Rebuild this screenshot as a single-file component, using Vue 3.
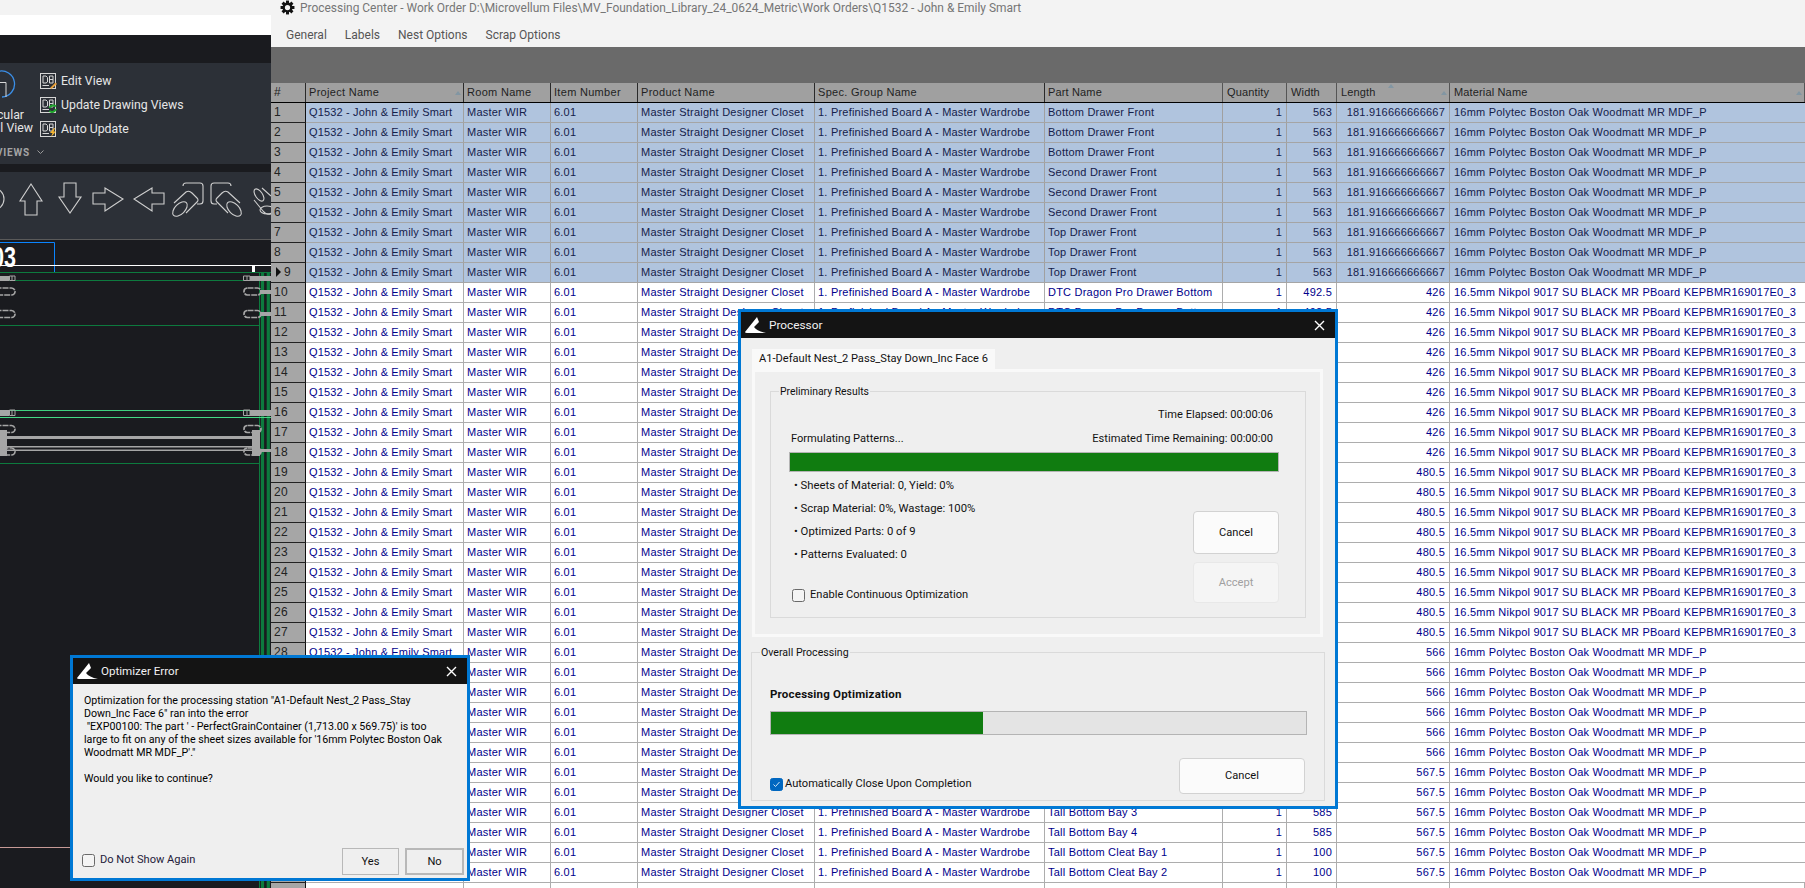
<script setup>
const M16 = '16mm Polytec Boston Oak Woodmatt MR MDF_P'
const N = '16.5mm Nikpol 9017 SU BLACK MR PBoard KEPBMR169017E0_3'
const SPEC = '1. Prefinished Board A - Master Wardrobe'
const known = {
  1: ['Bottom Drawer Front', 563], 2: ['Bottom Drawer Front', 563], 3: ['Bottom Drawer Front', 563],
  4: ['Second Drawer Front', 563], 5: ['Second Drawer Front', 563], 6: ['Second Drawer Front', 563],
  7: ['Top Drawer Front', 563], 8: ['Top Drawer Front', 563], 9: ['Top Drawer Front', 563],
  10: ['DTC Dragon Pro Drawer Bottom', 492.5], 11: ['DTC Dragon Pro Drawer Bottom', 492.5],
  36: ['Tall Bottom Bay 3', 585], 37: ['Tall Bottom Bay 4', 585],
  38: ['Tall Bottom Cleat Bay 1', 100], 39: ['Tall Bottom Cleat Bay 2', 100]
}
const rows = Array.from({ length: 39 }, (_, i) => {
  const n = i + 1
  const k = known[n]
  let length = '567.5'
  let material = M16
  if (n <= 9) length = '181.916666666667'
  else if (n <= 18) { length = '426'; material = N }
  else if (n <= 27) { length = '480.5'; material = N }
  else if (n <= 33) length = '566'
  const underDialog = n >= 29
  return {
    n,
    label: underDialog ? '' : n,
    project: underDialog ? '' : 'Q1532 - John & Emily Smart',
    selected: n <= 9,
    spec: k ? SPEC : '',
    part: k ? k[0] : '',
    qty: k ? 1 : '',
    width: k ? k[1] : '',
    length,
    material
  }
})
const tools = [
  { label: 'Edit View', badge: 'pencil' },
  { label: 'Update Drawing Views', badge: 'refresh' },
  { label: 'Auto Update', badge: 'bolt' }
]
const bullets = ['Sheets of Material: 0, Yield: 0%', 'Scrap Material: 0%, Wastage: 100%', 'Optimized Parts: 0 of 9', 'Patterns Evaluated: 0']
const teeth = [0, 45, 90, 135, 180, 225, 270, 315]
const pillYs = [291.5, 314, 429, 451.5]
const message = [
  'Optimization for the processing station "A1-Default Nest_2 Pass_Stay',
  'Down_Inc Face 6" ran into the error',
  ' "EXP00100: The part \' - PerfectGrainContainer (1,713.00 x 569.75)\' is too',
  'large to fit on any of the sheet sizes available for \'16mm Polytec Boston Oak',
  'Woodmatt MR MDF_P\'."',
  '',
  'Would you like to continue?'
].join('\n')
</script>

<template>
  <div class="desktop">
    <section class="cad">
      <div class="cad-white-top"></div>
      <div class="cad-white"></div>
      <div class="cad-dark"></div>
      <div class="ribbon">
        <svg class="view-circle" width="20" height="30" viewBox="0 0 20 30">
          <path d="M-8 1.5 A 13 13 0 1 1 -4 27" transform="translate(6 0)" fill="none" stroke="#3b8fe8" stroke-width="1.3" />
          <path d="M0 12.5 H6 V27" fill="none" stroke="#d8d8d8" stroke-width="1" />
        </svg>
        <div class="view-label">
          <span>cular</span>
          <span>il View</span>
        </div>
        <div class="tool-list">
          <div v-for="t in tools" :key="t.label" class="tool">
            <svg width="17" height="17" viewBox="0 0 17 17">
              <rect x="0.5" y="1.5" width="15" height="15" fill="none" stroke="#d6d6d6" />
              <path d="M3 4 H6 L7.5 5.5 V10 L6 11 H3 Z M9.5 4 H13 V11 H9.5 Z M9.5 7.5 H13" fill="none" stroke="#d6d6d6" />
              <path d="M2.5 13.5 H9" stroke="#d6d6d6" />
              <path v-if="t.badge === 'pencil'" d="M10 16 L15.5 10.5 L17 12 L11.5 17 Z" fill="#e8a13c" />
              <g v-else-if="t.badge === 'refresh'" fill="none" stroke="#1fa52c" stroke-width="2">
                <path d="M9.5 12 A4 4 0 0 1 16 10.5" />
                <path d="M16 13 A4 4 0 0 1 9.5 15" />
              </g>
              <path v-else d="M14 8 L10 13 H12.5 L11 17 L16 11.5 H13.5 L15 8 Z" fill="#f5b52e" />
            </svg>
            <span>{{ t.label }}</span>
          </div>
        </div>
        <div class="views-caption">
          <span>VIEWS</span>
          <svg width="7" height="5" viewBox="0 0 7 5"><path d="M0.5 0.5 L3.5 3.5 L6.5 0.5" fill="none" stroke="#9a9a9a" /></svg>
        </div>
      </div>
      <div class="cad-gap"></div>
      <div class="arrows">
        <svg width="271" height="67" viewBox="0 0 271 67" fill="none" stroke="#cfcfcf" stroke-width="1.1">
          <circle cx="-7" cy="27" r="11" />
          <path d="M31 12 L42 29 H37 V43 H25 V29 H20 Z" />
          <path d="M64 11 H76 V25 H81 L70 41 L59 25 H64 Z" />
          <path d="M93 21 H105 V16 L123 27 L105 39 V32 H93 Z" />
          <path d="M164 21 H152 V16 L134 27 L152 39 V32 H164 Z" />
          <g>
            <path d="M183 14 Q183 11 186 11 H200 Q203 11 203 14 V29 Q203 32 200 32 H197" />
            <ellipse cx="180" cy="37" rx="9" ry="5" transform="rotate(-45 180 37)" />
            <path d="M174 31 L186 20 Q189 18 192 21 L197 26 Q199 28 197 30 L186 41" />
          </g>
          <g transform="translate(414 0) scale(-1 1)">
            <path d="M183 14 Q183 11 186 11 H200 Q203 11 203 14 V29 Q203 32 200 32 H197" />
            <ellipse cx="180" cy="37" rx="9" ry="5" transform="rotate(-45 180 37)" />
            <path d="M174 31 L186 20 Q189 18 192 21 L197 26 Q199 28 197 30 L186 41" />
          </g>
          <ellipse cx="259" cy="23" rx="3.5" ry="7" transform="rotate(-35 259 23)" />
          <path d="M262 16 L271 24 M254 28 L263 39 Q266 43 271 42" />
          <ellipse cx="267" cy="38" rx="7" ry="4" />
        </svg>
      </div>
      <svg class="drawing" width="271" height="648" viewBox="0 240 271 648">
        <path d="M0 242.5 H54.5 V272" fill="none" stroke="#0a84ff" />
        <text class="dim" transform="translate(-8 267) scale(0.72 1)">03</text>
        <path d="M0 265.5 H271" stroke="#fff" />
        <rect x="252" y="266" width="3" height="6" fill="#fff" />
        <g stroke="#0d7a3e">
          <path d="M0 272.5 H271 M0 280.5 H271 M0 325.5 H260 M0 463.5 H260" />
          <path d="M259.5 272 V888" />
          <path d="M262.5 272 V888 M268.3 272 V888" stroke-width="3.2" />
        </g>
        <path d="M0 410.5 H271" stroke="#3fd07f" />
        <path d="M0 417.5 H271" stroke="#45d985" />
        <g fill="#a6a6a6">
          <rect x="0" y="276" width="9" height="5" />
          <rect x="250" y="276" width="21" height="5" />
          <rect x="0" y="410" width="9" height="6" />
          <rect x="250" y="410" width="21" height="6" />
          <rect x="260" y="290" width="11" height="4" />
          <rect x="260" y="312" width="11" height="4" />
          <rect x="0" y="430" width="7" height="26" />
          <rect x="252" y="430" width="8" height="26" />
          <rect x="7" y="436" width="245" height="3" />
          <rect x="7" y="446" width="245" height="1.5" />
          <rect x="7" y="449.5" width="245" height="1.5" />
          <rect x="260" y="449" width="11" height="3" />
        </g>
        <g fill="none" stroke="#a6a6a6">
          <path d="M9.5 276 H15 V280.5 H9.5 Z M12 276 V280 M243.5 276 H250 V280.5 H243.5 Z M247 276 V280" />
          <path d="M9.5 410 H15 V415.5 H9.5 Z M12 410 V415 M243.5 410 H250 V415.5 H243.5 Z M247 410 V415" />
        </g>
        <g v-for="y in pillYs" :key="y" fill="none" stroke="#a6a6a6" stroke-width="1.7" stroke-dasharray="6 1">
          <rect x="-8" :y="y - 3.5" width="23" height="7" rx="3.5" />
          <rect x="244" :y="y - 3.5" width="17" height="7" rx="3.5" />
        </g>
        <path d="M0 847.5 H70" stroke="#c79a96" />
      </svg>
    </section>

    <section class="center">
      <div class="pc-top">
        <div class="pc-title">
          <svg width="15" height="15" viewBox="-8 -8 16 16">
            <rect v-for="a in teeth" :key="a" x="-1.6" y="-7.4" width="3.2" height="3" :transform="`rotate(${a})`" fill="#111" />
            <circle r="4.1" fill="none" stroke="#111" stroke-width="2.6" />
          </svg>
          <span>Processing Center - Work Order D:\Microvellum Files\MV_Foundation_Library_24_0624_Metric\Work Orders\Q1532 - John &amp; Emily Smart</span>
        </div>
        <nav class="pc-menu">
          <span>General</span><span>Labels</span><span>Nest Options</span><span>Scrap Options</span>
        </nav>
      </div>
      <div class="band"></div>
      <div class="grid">
        <div class="row head">
          <div class="c num">#</div>
          <div class="c">Project Name<i class="sort"></i></div>
          <div class="c">Room Name</div>
          <div class="c">Item Number</div>
          <div class="c">Product Name</div>
          <div class="c">Spec. Group Name</div>
          <div class="c">Part Name</div>
          <div class="c">Quantity</div>
          <div class="c">Width</div>
          <div class="c">Length<i class="sort top"></i><i class="sort"></i></div>
          <div class="c">Material Name<i class="sort"></i></div>
        </div>
        <div v-for="r in rows" :key="r.n" class="row" :class="{ selected: r.selected }">
          <div class="c num"><i v-if="r.n === 9" class="current"></i>{{ r.label }}</div>
          <div class="c project">{{ r.project }}</div>
          <div class="c">Master WIR</div>
          <div class="c">6.01</div>
          <div class="c">Master Straight Designer Closet</div>
          <div class="c">{{ r.spec }}</div>
          <div class="c">{{ r.part }}</div>
          <div class="c right">{{ r.qty }}</div>
          <div class="c right">{{ r.width }}</div>
          <div class="c right">{{ r.length }}</div>
          <div class="c mat">{{ r.material }}</div>
        </div>
        <div class="row"><div class="c num"></div><div class="c"></div><div class="c"></div><div class="c"></div><div class="c"></div><div class="c"></div><div class="c"></div><div class="c"></div><div class="c"></div><div class="c"></div><div class="c"></div></div>
      </div>
    </section>

    <div class="win processor">
      <header class="win-title">
        <svg class="logo" width="21" height="16" viewBox="0 0 21 16"><path d="M12 0 L0 15 Q0 16 2 16 L21 16 Q12 14 9 10 L14 5 Z" fill="#fff" /></svg>
        <span>Processor</span>
        <svg class="close" width="11" height="11" viewBox="0 0 11 11"><path d="M1 1 L10 10 M10 1 L1 10" stroke="#fff" stroke-width="1.4" /></svg>
      </header>
      <div class="proc-body">
        <div class="tab">A1-Default Nest_2 Pass_Stay Down_Inc Face 6</div>
        <div class="tab-panel">
          <div class="group prelim">
            <span class="legend">Preliminary Results</span>
            <div class="status one"><span>Time Elapsed: 00:00:06</span></div>
            <div class="status two"><span>Formulating Patterns...</span><span>Estimated Time Remaining: 00:00:00</span></div>
            <div class="bar small"><div class="fill full"></div></div>
            <div class="prelim-lower">
              <div class="prelim-left">
                <div v-for="b in bullets" :key="b" class="bullet">• {{ b }}</div>
                <label class="check cont"><i class="box"></i>Enable Continuous Optimization</label>
              </div>
              <div class="prelim-btns">
                <div class="btn big">Cancel</div>
                <div class="btn big disabled">Accept</div>
              </div>
            </div>
          </div>
        </div>
        <div class="group overall">
          <span class="legend">Overall Processing</span>
          <div class="ov-label">Processing Optimization</div>
          <div class="bar large"><div class="fill part"></div></div>
          <div class="ov-bottom">
            <label class="check auto">
              <i class="box on"><svg width="9" height="9" viewBox="0 0 9 9"><path d="M1.5 4.5 L3.5 6.5 L7.5 2" fill="none" stroke="#cfe4f7" stroke-width="1" /></svg></i>
              Automatically Close Upon Completion
            </label>
            <div class="btn wide">Cancel</div>
          </div>
        </div>
      </div>
    </div>

    <div class="win opt-error">
      <header class="win-title">
        <svg class="logo" width="21" height="16" viewBox="0 0 21 16"><path d="M12 0 L0 15 Q0 16 2 16 L21 16 Q12 14 9 10 L14 5 Z" fill="#fff" /></svg>
        <span>Optimizer Error</span>
        <svg class="close" width="11" height="11" viewBox="0 0 11 11"><path d="M1 1 L10 10 M10 1 L1 10" stroke="#fff" stroke-width="1.4" /></svg>
      </header>
      <div class="err-body">
        <p class="msg">{{ message }}</p>
        <div class="err-foot">
          <label class="check dns"><i class="box"></i>Do Not Show Again</label>
          <div class="err-btns">
            <div class="btn yes">Yes</div>
            <div class="btn no">No</div>
          </div>
        </div>
      </div>
    </div>
  </div>
</template>

<style>
html, body { margin: 0; background: #1a1b1f; overflow: hidden; }
</style>

<style scoped>
.desktop {
  position: relative;
  display: flex;
  width: 1805px;
  height: 888px;
  overflow: hidden;
  font-family: Roboto, "Liberation Sans", sans-serif;
}
.cad {
  flex: 0 0 271px;
  width: 271px;
  background: #1a1b1f;
  overflow: hidden;
  display: flex;
  flex-direction: column;
}
.cad > * { flex: none; }
.cad-white-top { height: 15px; background: #f3f3f3; }
.cad-white { height: 20px; background: #fff; }
.cad-dark { height: 28px; background: #1a1b1f; }
.ribbon {
  position: relative;
  height: 101px;
  background: #2c3037;
  color: #e6e6e6;
  font-size: 12.3px;
}
.view-circle { position: absolute; left: 0; top: 7px; overflow: visible; }
.view-label {
  position: absolute;
  right: 238px;
  top: 46px;
  display: flex;
  flex-direction: column;
  align-items: flex-end;
  line-height: 13px;
  white-space: nowrap;
}
.view-label span:first-child { margin-right: 9px; }
.tool-list {
  position: absolute;
  left: 40px;
  top: 9px;
  display: flex;
  flex-direction: column;
  gap: 7px;
}
.tool {
  display: flex;
  align-items: center;
  gap: 4px;
  height: 17px;
  white-space: nowrap;
}
.views-caption {
  position: absolute;
  right: 227px;
  top: 84px;
  display: flex;
  align-items: center;
  gap: 7px;
  color: #a4a4a4;
  font-size: 10px;
  font-weight: 700;
  letter-spacing: 0.8px;
}
.cad-gap { height: 8px; background: #1a1b1f; }
.arrows {
  height: 68px;
  box-sizing: border-box;
  background: #2c3037;
  border-bottom: 1px solid #5a5a5a;
}
.arrows svg { display: block; }
.drawing { display: block; }
.dim { font-family: "Liberation Sans", sans-serif; font-size: 30px; font-weight: 700; fill: #fff; }

.center { flex: 1; min-width: 0; background: #fff; display: flex; flex-direction: column; }
.center > * { flex: none; }
.pc-top { height: 47px; background: #f3f3f3; }
.pc-title {
  display: flex;
  align-items: center;
  gap: 5px;
  height: 15px;
  padding-left: 9px;
  color: #767676;
  font-size: 11.95px;
  white-space: nowrap;
}
.pc-menu {
  display: flex;
  gap: 18px;
  padding: 12px 0 0 15px;
  color: #555;
  font-size: 12px;
  line-height: 16px;
}
.band { height: 36px; background: #6a6a6a; }
.grid {
  font-family: "Liberation Sans", sans-serif;
  font-size: 11px;
  color: #00008b;
}
.row {
  display: grid;
  grid-template-columns: 35px 158px 87px 87px 177px 230px 178px 64px 50px 113px 355px;
  height: 20px;
  background: #fff;
  box-sizing: border-box;
  border-bottom: 1px solid #adadad;
}
.c {
  position: relative;
  box-sizing: border-box;
  padding: 0 3px;
  line-height: 18px;
  white-space: nowrap;
  overflow: hidden;
  border-right: 1px solid #adadad;
  letter-spacing: 0.22px;
}
.project { letter-spacing: 0.15px; }
.right { text-align: right; padding-right: 4px; }
.mat { padding-left: 4px; border-right: 0; }
.row.selected { background: #b0c4de; color: #14204a; border-bottom-color: #a5a5a5; }
.row.selected .c { border-right-color: #a0a0a0; }
.num {
  background: #a6a6a6;
  color: #222;
  border-right: 1px solid #111;
  font-size: 12px;
  box-shadow: 0 1px 0 #222;
}
.row.selected .c.num { border-right-color: #111; }
.row.head {
  background: #a0a0a0;
  color: #1f1f1f;
  border-bottom: 1px solid #000;
}
.row.head .c {
  background: #a0a0a0;
  border-right: 1px solid #2a2a2a;
  box-shadow: none;
  letter-spacing: 0.3px;
}
.row.head .c:nth-child(n+7) { border-right-color: #555; letter-spacing: 0.15px; }
.row.head .c:nth-child(n+8) { padding-left: 4px; }
.sort {
  position: absolute;
  right: 2px;
  top: 8px;
  width: 0;
  height: 0;
  border-left: 3px solid transparent;
  border-right: 3px solid transparent;
  border-bottom: 4px solid #8296a3;
}
.sort.top { right: 55px; top: 1px; }
.current {
  display: inline-block;
  vertical-align: -1px;
  width: 0;
  height: 0;
  margin: 0 3px 0 2px;
  border-top: 5px solid transparent;
  border-bottom: 5px solid transparent;
  border-left: 5px solid #111;
}

.win {
  position: absolute;
  box-sizing: border-box;
  display: flex;
  flex-direction: column;
  border: 3px solid #0078d4;
  background: #efefef;
  color: #111;
  font-size: 11.1px;
  line-height: 16px;
}
.processor { left: 738px; top: 309px; width: 600px; height: 500px; }
.opt-error { left: 70px; top: 655px; width: 400px; height: 226px; }
.win-title {
  flex: none;
  display: flex;
  align-items: center;
  height: 26px;
  padding: 0 10px 0 4px;
  background: #141414;
  color: #f2f2f2;
  font-size: 11.8px;
}
.win-title span { margin-left: 3px; }
.opt-error .win-title { font-size: 11.6px; }
.logo { flex: none; }
.close { margin-left: auto; }
.proc-body { flex: 1; padding: 11px 10px 0 10px; }
.tab {
  box-sizing: border-box;
  width: 243px;
  height: 20px;
  margin-left: 1px;
  padding: 2px 0 0 7px;
  background: #f9f9f9;
  white-space: nowrap;
}
.tab-panel {
  box-sizing: border-box;
  height: 268px;
  margin: 0 2px 0 1px;
  padding: 19px 14px 16px 15px;
  background: #efefef;
  border: 3px solid #f9f9f9;
}
.group {
  position: relative;
  box-sizing: border-box;
  border: 1px solid #dadada;
}
.legend {
  position: absolute;
  left: 8px;
  top: -8px;
  padding: 0 1px;
  background: #efefef;
  white-space: nowrap;
  font-size: 10.4px;
}
.prelim { height: 227px; padding: 15px 27px 0 20px; }
.status { display: flex; justify-content: space-between; height: 16px; padding-right: 5px; white-space: nowrap; }
.status.one { justify-content: flex-end; }
.status.two { margin-top: 8px; }
.bar {
  box-sizing: border-box;
  border: 1px solid #b4b4b4;
  background: #e4e4e4;
}
.bar.small { height: 20px; margin: 5px 0 0 -2px; width: 490px; }
.bar.large { height: 24px; margin-top: 9px; width: 537px; }
.fill { height: 100%; background: #107c10; }
.fill.full { width: 100%; }
.fill.part { width: 212px; }
.prelim-lower { display: flex; justify-content: space-between; }
.prelim-left { padding: 2px 0 0 3px; }
.bullet { height: 23px; line-height: 23px; white-space: nowrap; font-size: 11.3px; }
.check { display: flex; align-items: center; white-space: nowrap; }
.box {
  box-sizing: border-box;
  display: inline-flex;
  align-items: center;
  justify-content: center;
  flex: none;
  width: 13px;
  height: 13px;
  border: 1px solid #6a6a6a;
  border-radius: 2.5px;
  background: #f4f4f4;
}
.box.on { background: #0067c0; border-color: #0067c0; }
.cont { margin: 21px 0 0 -2px; gap: 5px; }
.prelim-btns {
  display: flex;
  flex-direction: column;
  gap: 8px;
  padding-top: 39px;
  margin-right: -1px;
}
.btn {
  box-sizing: border-box;
  display: flex;
  align-items: center;
  justify-content: center;
  background: #fbfbfb;
  border: 1px solid #d2d2d2;
  border-radius: 4px;
}
.btn.big { width: 86px; height: 43px; }
.btn.big.disabled { height: 41px; color: #a0a0a0; background: #f5f5f5; border-color: #e8e8e8; }
.overall { height: 149px; margin: 15px 0 0 0; padding: 33px 18px 0 18px; }
.overall .legend { top: -8px; font-size: 10.6px; }
.ov-label { font-weight: 700; font-size: 11.5px; height: 16px; letter-spacing: 0.2px; white-space: nowrap; }
.ov-bottom { display: flex; justify-content: space-between; margin-top: 23px; }
.auto { align-self: flex-start; margin-top: 18px; gap: 2px; }
.btn.wide { width: 126px; height: 36px; margin-right: 1px; }
.err-body { flex: 1; display: flex; flex-direction: column; min-height: 0; }
.msg {
  margin: 0;
  padding: 10px 0 0 11px;
  white-space: pre;
  line-height: 13px;
  font-size: 10.65px;
  color: #000;
}
.err-foot {
  margin-top: auto;
  display: flex;
  justify-content: space-between;
  align-items: flex-end;
  padding: 0 3px 3px 9px;
}
.dns { gap: 5px; margin-bottom: 7px; color: #1e1a3a; }
.err-btns { display: flex; gap: 6px; }
.btn.yes, .btn.no { height: 27px; border-radius: 0; background: #efefef; }
.btn.yes { width: 57px; border: 1px solid #b8b8b8; }
.btn.no { width: 59px; border: 2px solid #b8b8b8; }
</style>
